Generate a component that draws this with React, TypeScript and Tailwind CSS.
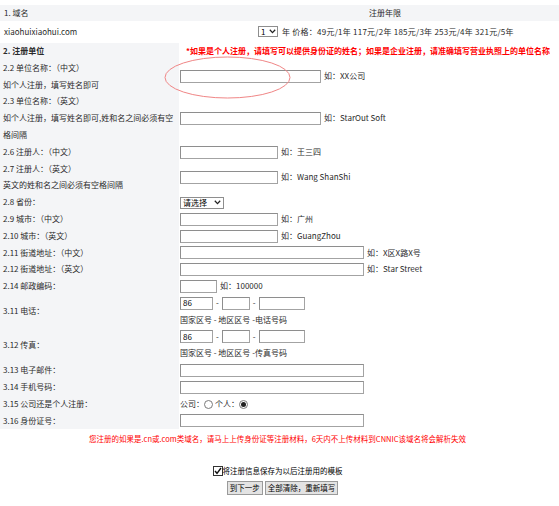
import type { ReactNode } from 'react'

const tip = 'ml-[3px] whitespace-nowrap'

function Box({ w, value }: { w: string; value?: string }) {
  return (
    <input
      readOnly
      defaultValue={value}
      className={`h-[13px] ${w} border border-[#a3a3a3] border-t-[#8e8e8e] border-l-[#8e8e8e] bg-white px-[2px] text-[8px] text-black outline-none`}
    />
  )
}

function Chevron() {
  return (
    <svg width="7" height="5" viewBox="0 0 7 5" className="shrink-0">
      <path d="M0.8 0.8 L3.5 3.6 L6.2 0.8" fill="none" stroke="#222" strokeWidth="1.3" />
    </svg>
  )
}

function Radio({ on }: { on?: boolean }) {
  return (
    <span className="inline-flex h-[9px] w-[9px] items-center justify-center rounded-full border border-[#7a7a7a] bg-white">
      {on && <span className="h-[5px] w-[5px] rounded-full bg-[#222]" />}
    </span>
  )
}

function Line({ children }: { children: ReactNode }) {
  return <div className="flex h-[16.8px] items-center whitespace-nowrap">{children}</div>
}

function Row({ label, children, bold }: { label: ReactNode; children?: ReactNode; bold?: boolean }) {
  return (
    <div className="flex">
      <div className={`flex w-[179px] shrink-0 flex-col justify-center bg-[#f4f5f7] pl-[3px] ${bold ? 'font-bold' : ''}`}>
        {label}
      </div>
      <div className="flex min-w-0 flex-1 flex-col justify-center pl-[1px]">{children}</div>
    </div>
  )
}

export default function App() {
  return (
    <div className="relative h-[506px] w-[559px] overflow-hidden bg-white text-[8px] leading-[16.8px] text-[#2a2a2a] [font-family:'Noto_Sans_CJK_SC','Noto_Sans',sans-serif]">
      <div className="h-[5px]" />

      {/* domain */}
      <div className="flex h-[16px] items-center bg-[#f4f5f7]">
        <div className="w-[257px] pl-[4px]">1. 域名</div>
        <div className="w-[256px] text-center">注册年限</div>
      </div>
      <div className="flex h-[22px] items-center">
        <div className="w-[257px] pl-[4px]">xiaohuixiaohui.com</div>
        <div className="flex items-center pl-[1px] whitespace-nowrap">
          <div className="flex h-[11px] w-[20px] items-center justify-between border border-[#8e8e8e] bg-white pl-[2px] pr-[1px] leading-[9px] text-black">
            1<Chevron />
          </div>
          <span className="ml-[4px] tracking-[0.25px]">年 价格：49元/1年 117元/2年 185元/3年 253元/4年 321元/5年</span>
        </div>
      </div>

      {/* registrant */}
      <Row bold label={<div>2. 注册单位</div>}>
        <div className="pl-[6px] font-bold whitespace-nowrap text-[#ff0000]">
          *如果是个人注册，请填写可以提供身份证的姓名；如果是企业注册，请准确填写营业执照上的单位名称
        </div>
      </Row>
      <Row label={<><div>2.2 单位名称：（中文）</div><div>如个人注册，填写姓名即可</div></>}>
        <Line><Box w="w-[141px]" /><span className={tip}>如：XX公司</span></Line>
      </Row>
      <Row label={<><div>2.3 单位名称：（英文）</div><div>如个人注册，填写姓名即可,姓和名之间必须有空</div><div>格间隔</div></>}>
        <Line><Box w="w-[141px]" /><span className={tip}>如：StarOut Soft</span></Line>
      </Row>
      <Row label={<div>2.6 注册人：（中文）</div>}>
        <Line><Box w="w-[98px]" /><span className={tip}>如：王三四</span></Line>
      </Row>
      <Row label={<><div>2.7 注册人：（英文）</div><div>英文的姓和名之间必须有空格间隔</div></>}>
        <Line><Box w="w-[98px]" /><span className={tip}>如：Wang ShanShi</span></Line>
      </Row>
      <Row label={<div>2.8 省份：</div>}>
        <Line>
          <div className="flex h-[12px] w-[44px] items-center justify-between border border-[#8e8e8e] bg-white pl-[2px] pr-[2px] leading-[10px] text-black">
            请选择<Chevron />
          </div>
        </Line>
      </Row>
      <Row label={<div>2.9 城市：（中文）</div>}>
        <Line><Box w="w-[98px]" /><span className={tip}>如：广州</span></Line>
      </Row>
      <Row label={<div>2.10 城市：（英文）</div>}>
        <Line><Box w="w-[98px]" /><span className={tip}>如：GuangZhou</span></Line>
      </Row>
      <Row label={<div>2.11 街道地址：（中文）</div>}>
        <Line><Box w="w-[184px]" /><span className={tip}>如：X区X路X号</span></Line>
      </Row>
      <Row label={<div>2.12 街道地址：（英文）</div>}>
        <Line><Box w="w-[184px]" /><span className={tip}>如：Star Street</span></Line>
      </Row>
      <Row label={<div>2.14 邮政编码：</div>}>
        <Line><Box w="w-[37px]" /><span className={tip}>如：100000</span></Line>
      </Row>
      <Row label={<div>3.11 电话：</div>}>
        <Line>
          <Box w="w-[33px]" value="86" />
          <span className="mx-[3px]">-</span>
          <Box w="w-[28px]" />
          <span className="mx-[3px]">-</span>
          <Box w="w-[46px]" />
        </Line>
        <Line>国家区号 - 地区区号 -电话号码</Line>
      </Row>
      <Row label={<div>3.12 传真：</div>}>
        <Line>
          <Box w="w-[33px]" value="86" />
          <span className="mx-[3px]">-</span>
          <Box w="w-[28px]" />
          <span className="mx-[3px]">-</span>
          <Box w="w-[46px]" />
        </Line>
        <Line>国家区号 - 地区区号 -传真号码</Line>
      </Row>
      <Row label={<div>3.13 电子邮件：</div>}>
        <Line><Box w="w-[184px]" /></Line>
      </Row>
      <Row label={<div>3.14 手机号码：</div>}>
        <Line><Box w="w-[184px]" /></Line>
      </Row>
      <Row label={<div>3.15 公司还是个人注册：</div>}>
        <Line>
          公司：<Radio />
          <span className="ml-[2px]">个人：</span><Radio on />
        </Line>
      </Row>
      <Row label={<div>3.16 身份证号：</div>}>
        <Line><Box w="w-[184px]" /></Line>
      </Row>

      {/* footer */}
      <div className="w-[555px] pt-[3px] text-center text-[7.5px] leading-[13px] whitespace-nowrap text-[#ff0000]">
        您注册的如果是.cn或.com类域名，请马上上传身份证等注册材料，6天内不上传材料到CNNIC该域名将会解析失效
      </div>
      <div className="mt-[19px] flex h-[13px] w-[555px] items-center justify-center text-[7.5px] leading-[13px] text-black">
        <span className="flex h-[10px] w-[10px] items-center justify-center border border-[#333] bg-white">
          <svg width="8" height="8" viewBox="0 0 8 8">
            <path d="M1 4 L3 6.3 L7 1" fill="none" stroke="#111" strokeWidth="1.4" />
          </svg>
        </span>
        <span>将注册信息保存为以后注册用的模板</span>
      </div>
      <div className="mt-[4px] flex w-[555px] justify-center gap-[2px] pl-[10px]">
        <button className="h-[14px] border border-[#9a9a9a] bg-[#e3e3e3] px-[2px] text-[7.5px] leading-[12px] text-black">
          到下一步
        </button>
        <button className="h-[14px] border border-[#9a9a9a] bg-[#e3e3e3] px-[2px] text-[7.5px] leading-[12px] text-black">
          全部清除，重新填写
        </button>
      </div>

      {/* hand-drawn annotation around the company name field */}
      <svg className="pointer-events-none absolute left-[163px] top-[56px]" width="130" height="44" viewBox="0 0 130 44">
        <ellipse cx="64.5" cy="21.5" rx="62.5" ry="20.5" fill="none" stroke="#f08686" strokeWidth="1" />
      </svg>
    </div>
  )
}
